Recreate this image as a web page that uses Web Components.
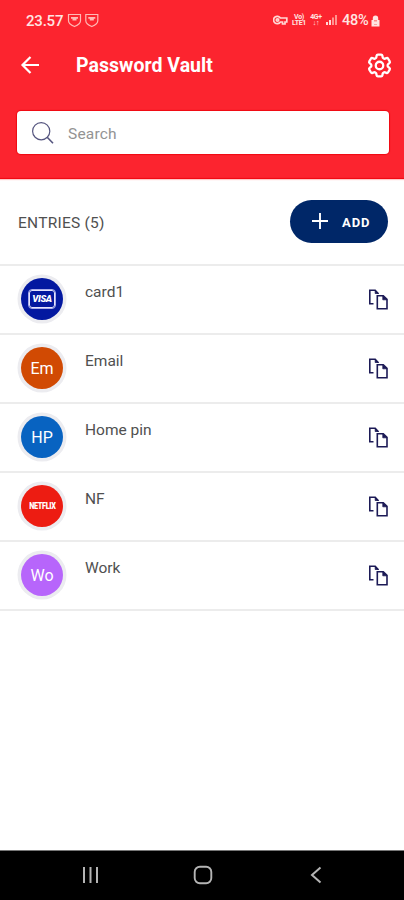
<!DOCTYPE html>
<html lang="en">
<head>
<meta charset="utf-8">
<title>Password Vault</title>
<style>
html, body { margin: 0; height: 100%; background: #fff; }
body { font-family: Roboto, "Liberation Sans", sans-serif; overflow: hidden; }
</style>
</head>
<body>
<vault-screen></vault-screen>
<script>
const define = (name, html) => customElements.define(name, class extends HTMLElement {
  constructor() {
    super();
    const t = document.createElement('template');
    t.innerHTML = html;
    this.attachShadow({ mode: 'open' }).append(t.content.cloneNode(true));
  }
});

define('status-bar', `
<style>
:host { display: flex; height: 40px; align-items: center; padding: 0 24px 0 26px; box-sizing: border-box; color: #ffe4e2; }
.time { font-size: 15px; font-weight: 500; letter-spacing: -.2px; line-height: 20px; width: 41px; padding-top: 1px; white-space: nowrap; }
.shields { flex: none; }
.net { display: flex; margin-left: auto; align-items: center; }
.stack { font-size: 7px; font-weight: 700; line-height: 6.5px; text-align: center; width: 16px; letter-spacing: -.3px; }
.battery { font-size: 14.500px; font-weight: 500; letter-spacing: -.3px; line-height: 20px; margin-left: 4px; padding-top: 2px; width: 29px; white-space: nowrap; }
svg { display: block; }
</style>
<span class="time">23.57</span>
<svg class="shields" width="34" height="16" viewBox="0 0 34 16" fill="none" stroke="#ffb9b5" stroke-width="1.200">
  <path d="M1.500 2.500h12v6.200q0 3.300-6 5.800q-6-2.500-6-5.800zM18.800 2.500h12v6.200q0 3.300-6 5.800q-6-2.500-6-5.800z"/>
  <path d="M4 5.800h7M5.500 7.600h4M21.300 5.800h7M22.800 7.600h4" stroke-width="1.700"/>
</svg>
<span class="net">
  <svg width="16" height="12" viewBox="0 0 16 12" fill="none" stroke="#ffd8d5" stroke-width="1.700">
    <path d="M7.400 4A3.700 3.700 0 1 0 7.400 8H9.500V10H12V8H13.800V4Z"/><circle cx="4.500" cy="6" r="1.200"/>
  </svg>
  <span class="stack" style="margin-left:2px">Vo)<br>LTE1</span>
  <span class="stack" style="margin-left:1px">4G+<br>↓↑</span>
  <svg width="13" height="12" viewBox="0 0 13 12" style="margin-left:1px">
    <path d="M1 8h2v3H1zM4 6h2v5H4z" fill="#ffd8d5"/><path d="M7 3.500h2V11H7zM10 1h2v10h-2z" fill="#ff9390"/>
  </svg>
  <span class="battery">48%</span>
  <svg width="9" height="13" viewBox="0 0 9 13">
    <path d="M.5 6h1.300V4.200a2.700 2.700 0 0 1 5.400 0V6h1.300v6.500H.5z" fill="#ffe4e2"/><path d="M3 6h3v1.500H3zM3 10h3v.8H3z" fill="#fc8d8b"/>
  </svg>
</span>`);

define('title-bar', `
<style>
:host { display: flex; height: 52px; align-items: center; padding: 0 10px 2px 20px; box-sizing: border-box; color: #fff; }
h1 { margin: 0 auto 0 36px; padding-top: 2px; font-size: 19.500px; font-weight: 700; line-height: 24px; letter-spacing: .03px; white-space: nowrap; }
svg { display: block; flex: none; fill: none; stroke: #fff; }
</style>
<svg width="20" height="20" viewBox="0 0 20 20" stroke-width="2.200"><path d="M19 10H2.500M10.500 2L2.500 10L10.500 18"/></svg>
<h1><slot></slot></h1>
<svg width="29" height="29" viewBox="0 0 24 24" stroke-width="1.900" stroke-linejoin="round">
<path d="M9.594 3.94c.09-.542.56-.94 1.11-.94h2.593c.55 0 1.02.398 1.11.94l.213 1.281c.063.374.313.686.645.87.074.04.147.083.22.127.325.196.72.257 1.075.124l1.217-.456a1.125 1.125 0 0 1 1.37.49l1.296 2.247a1.125 1.125 0 0 1-.26 1.431l-1.003.827c-.293.241-.438.613-.43.992a7.723 7.723 0 0 1 0 .255c-.008.378.137.75.43.991l1.004.827c.424.35.534.955.26 1.43l-1.298 2.247a1.125 1.125 0 0 1-1.369.491l-1.217-.456c-.355-.133-.75-.072-1.076.124a6.47 6.47 0 0 1-.22.128c-.331.183-.581.495-.644.869l-.213 1.281c-.09.543-.56.94-1.11.94h-2.594c-.55 0-1.019-.398-1.11-.94l-.213-1.281c-.062-.374-.312-.686-.644-.87a6.52 6.52 0 0 1-.22-.127c-.325-.196-.72-.257-1.076-.124l-1.217.456a1.125 1.125 0 0 1-1.369-.49l-1.297-2.247a1.125 1.125 0 0 1 .26-1.431l1.004-.827c.292-.24.437-.613.43-.991a6.932 6.932 0 0 1 0-.255c.007-.38-.138-.751-.43-.992l-1.004-.827a1.125 1.125 0 0 1-.26-1.43l1.297-2.247a1.125 1.125 0 0 1 1.37-.491l1.216.456c.356.133.751.072 1.076-.124.072-.044.146-.086.22-.128.332-.183.582-.495.644-.869l.214-1.28Z"/>
<circle cx="12" cy="12" r="3.100"/></svg>`);

define('search-field', `
<style>
:host { display: flex; align-items: center; height: 43px; margin: 19px 15px 0 17px; padding-left: 14px; border-radius: 4px; background: #fff; box-sizing: border-box; box-shadow: 0 0 1px 1px #ef0912; }
span { margin-left: 14px; font-size: 15.500px; letter-spacing: .2px; line-height: 20px; color: #939393; padding-top: 3px; }
</style>
<svg width="23" height="24" viewBox="0 0 23 24" fill="none" stroke="#55557f" stroke-width="1.200"><circle cx="10.200" cy="10.200" r="8.600"/><path d="M16.200 16.200L22 22.300" stroke-width="1.600"/></svg>
<span><slot></slot></span>`);

define('add-button', `
<style>
:host { display: flex; align-items: center; width: 98px; height: 43px; border-radius: 22px; background: #002768; color: #fff; box-sizing: border-box; padding-left: 22px; }
span { margin-left: 14px; font-size: 13px; font-weight: 700; letter-spacing: .9px; line-height: 20px; padding-top: 3px; }
</style>
<svg width="16" height="16" viewBox="0 0 16 16" stroke="#fff" stroke-width="1.900"><path d="M0 8H16M8 0V16"/></svg>
<span><slot></slot></span>`);

define('entries-bar', `
<style>
:host { display: flex; align-items: center; justify-content: space-between; height: 87px; padding: 0 16px 1px 18px; box-sizing: border-box; border-bottom: 2px solid #ececec; }
span { font-size: 15.500px; letter-spacing: .25px; line-height: 20px; color: #505050; padding-top: 3px; }
</style>
<span><slot></slot></span><slot name="action"></slot>`);

define('entry-badge', `
<style>
:host { display: flex; flex: none; width: 42px; height: 42px; border-radius: 50%; align-items: center; justify-content: center; color: #fff; background: var(--tint); box-shadow: 0 0 0 3.500px #ececf0; font-size: 16px; line-height: 20px; white-space: nowrap; }
.in { padding-top: 2px; }
:host([kind=visa]) .in { padding: 0; border: 1.500px solid #e4e4fc; outline: .5px solid #a9adea; border-radius: 3px; width: 24px; height: 16px; font: italic 900 9.500px/16px Roboto, sans-serif; text-align: center; letter-spacing: -.3px; }
:host([kind=netflix]) .in { padding: 0; font: 900 8.500px/10px Roboto, sans-serif; letter-spacing: -.4px; transform: scaleX(.86); }
</style>
<span class="in"><slot></slot></span>`);

define('entry-row', `
<style>
:host { display: flex; align-items: center; height: 69px; box-sizing: border-box; border-bottom: 2px solid #ececec; padding: 0 15px 1px 21px; }
.name { align-self: flex-start; margin: 16px auto 0 22px; font-size: 15.500px; letter-spacing: 0; line-height: 20px; color: #505050; }
svg { display: block; }
</style>
<slot name="badge"></slot><span class="name"><slot></slot></span>
<svg width="21" height="21" viewBox="0 0 21 21" fill="none" stroke="#1c1a56" stroke-width="1.600">
<path d="M5.500 14.700H1.800V1.300H7.200L10 4.200V5"/><path d="M7.200 1.300V4.500H10.200z" fill="#1c1a56" stroke-width=".8"/>
<path d="M9.300 6.800H15.300L19 10.400V19.700H9.300z"/><path d="M14.800 7V10.800H18.800z" fill="#1c1a56" stroke-width=".8"/></svg>`);

define('nav-bar', `
<style>
:host { display: grid; grid-template-columns: repeat(3, 113px); justify-content: center; justify-items: center; height: 50px; margin-top: auto; background: #000; box-sizing: border-box; border-top: 1px solid #777; align-items: center; padding: 0 0 1px 2px; }
svg { display: block; fill: none; stroke: #b4b4b4; }
</style>
<svg width="19" height="20" viewBox="0 0 19 20" stroke-width="2"><path d="M3 2V18M9.500 2V18M16 2V18"/></svg>
<svg width="20" height="20" viewBox="0 0 20 20" stroke-width="1.900"><rect x="1.700" y="1.700" width="16.600" height="16.600" rx="5.200"/></svg>
<svg width="14" height="20" viewBox="0 0 14 20" stroke-width="2"><path d="M11.500 2.500L3 10L11.500 17.500"/></svg>`);

define('vault-screen', `
<style>
:host { display: flex; flex-direction: column; width: 404px; height: 900px; background: #fff; }
header { height: 179px; background: #fc242f; box-shadow: inset 0 -2px 1px -1px #ef0912, 0 1px 1px #ffc9c9; }
main { display: block; }
</style>
<header>
  <status-bar></status-bar>
  <title-bar>Password Vault</title-bar>
  <search-field>Search</search-field>
</header>
<main>
  <entries-bar>ENTRIES (5)<add-button slot="action">ADD</add-button></entries-bar>
  <entry-row>card1<entry-badge slot="badge" kind="visa" style="--tint:#0318a0">VISA</entry-badge></entry-row>
  <entry-row>Email<entry-badge slot="badge" style="--tint:#d14a03">Em</entry-badge></entry-row>
  <entry-row>Home pin<entry-badge slot="badge" style="--tint:#0863c1">HP</entry-badge></entry-row>
  <entry-row>NF<entry-badge slot="badge" kind="netflix" style="--tint:#ed1c12">NETFLIX</entry-badge></entry-row>
  <entry-row>Work<entry-badge slot="badge" style="--tint:#b765fb">Wo</entry-badge></entry-row>
</main>
<nav-bar></nav-bar>`);
</script>
</body>
</html>
